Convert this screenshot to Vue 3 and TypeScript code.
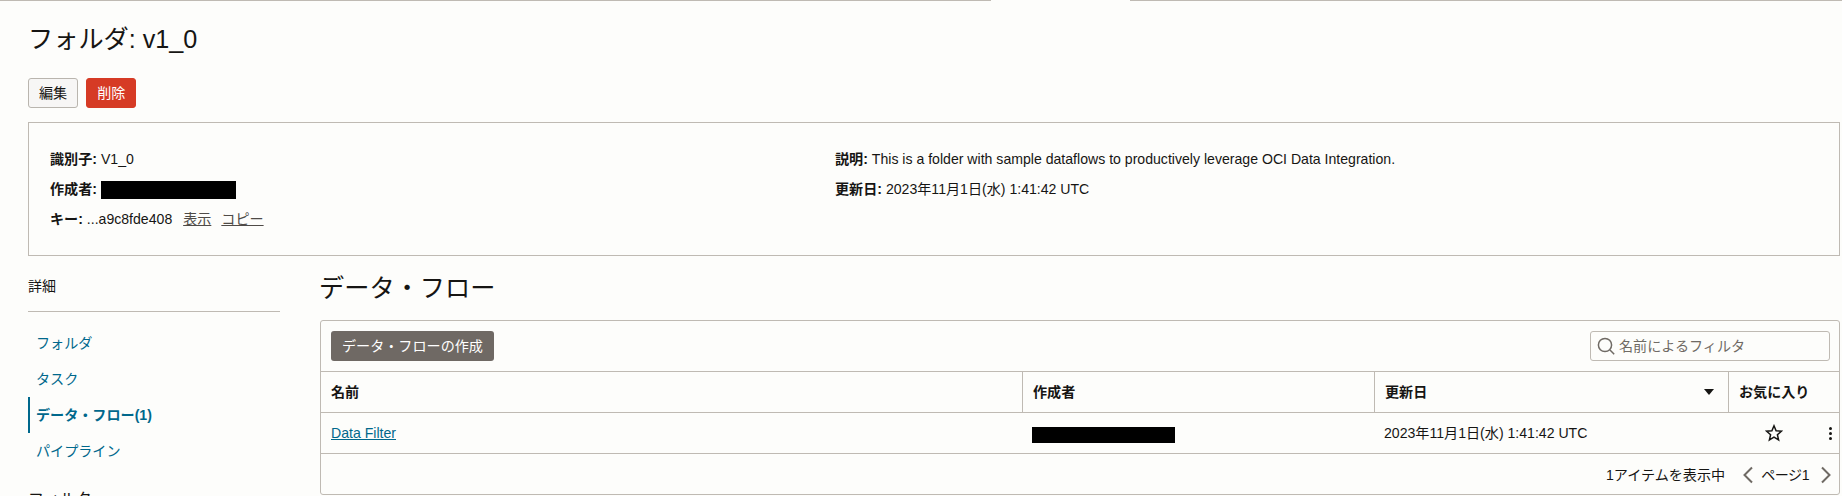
<script setup lang="ts">
const navItems = [
  { label: 'フォルダ', active: false },
  { label: 'タスク', active: false },
  { label: 'データ・フロー(1)', active: true },
  { label: 'パイプライン', active: false },
]
</script>

<template>
  <div class="page">
    <div class="topline"><span class="seg left"></span><span class="seg right"></span></div>
    <h1 class="title">フォルダ: v1_0</h1>
    <div class="actions">
      <button class="btn plain">編集</button>
      <button class="btn danger">削除</button>
    </div>
    <section class="info">
      <div class="info-col">
        <p><b>識別子:</b> V1_0</p>
        <p class="creator"><b>作成者:</b> <span class="redact top"></span></p>
        <p><b>キー:</b> ...a9c8fde408 <a class="mute first">表示</a><a class="mute">コピー</a></p>
      </div>
      <div class="info-col second">
        <p><b>説明:</b> This is a folder with sample dataflows to productively leverage OCI Data Integration.</p>
        <p class="creator"><b>更新日:</b> 2023年11月1日(水) 1:41:42 UTC</p>
      </div>
    </section>
    <div class="body">
      <aside class="side">
        <h3 class="side-title">詳細</h3>
        <ul class="nav">
          <li v-for="item in navItems" :key="item.label" :class="['nav-item', { active: item.active }]">{{ item.label }}</li>
        </ul>
        <h3 class="side-filter">フィルタ</h3>
      </aside>
      <main class="content">
        <h2 class="heading">データ・フロー</h2>
        <div class="panel">
          <div class="toolbar">
            <button class="btn create">データ・フローの作成</button>
            <label class="search">
              <svg width="20" height="20" viewBox="0 0 20 20" fill="none" stroke="#6f6a64" stroke-width="1.5">
                <circle cx="9" cy="9" r="6.6" />
                <path d="M14 14l4.2 4.2" />
              </svg>
              <span>名前によるフィルタ</span>
            </label>
          </div>
          <div class="row head">
            <div class="cell">名前</div>
            <div class="cell">作成者</div>
            <div class="cell sort">更新日<span class="caret"></span></div>
            <div class="cell">お気に入り</div>
          </div>
          <div class="row data">
            <div class="cell"><a class="link">Data Filter</a></div>
            <div class="cell"><span class="redact tbl"></span></div>
            <div class="cell">2023年11月1日(水) 1:41:42 UTC</div>
            <div class="cell fav">
              <svg class="star" width="18" height="18" viewBox="0 0 18 18" fill="none" stroke="#161513" stroke-width="1.5" stroke-linejoin="miter">
                <path d="M9 1.8l2.1 4.9 5.3.5-4 3.5 1.2 5.2L9 13.2l-4.6 2.7 1.2-5.2-4-3.5 5.3-.5z" />
              </svg>
              <span class="dots"><i></i><i></i><i></i></span>
            </div>
          </div>
          <div class="footer">
            <span class="count">1アイテムを表示中</span>
            <svg class="chev" width="12" height="18" viewBox="0 0 12 18" fill="none" stroke="#6f6a64" stroke-width="2"><path d="M10 1.5L2.5 9l7.5 7.5" /></svg>
            <span class="pageno">ページ1</span>
            <svg class="chev" width="12" height="18" viewBox="0 0 12 18" fill="none" stroke="#6f6a64" stroke-width="2"><path d="M2 1.5L9.5 9 2 16.5" /></svg>
          </div>
        </div>
      </main>
    </div>
  </div>
</template>

<style>
html, body { margin: 0; height: 496px; overflow: hidden; background: #fdfdfb; }
</style>

<style scoped>
.page {
  height: 496px;
  overflow: hidden;
  padding: 0 2px 0 28px;
  box-sizing: border-box;
  background: #fdfdfb;
  color: #161513;
  font-family: "Liberation Sans", "Noto Sans CJK JP", sans-serif;
  font-size: 14.1px;
  font-weight: 400;
  line-height: 20px;
}
.topline { display: flex; justify-content: space-between; height: 2px; margin: 0 -2px 0 -28px; }
.seg { display: block; height: 1px; background: #bfbab3; }
.seg.left { width: 991px; }
.seg.right { width: 712px; }
.title { margin: 22px 0 0; font-size: 25.2px; font-weight: 400; line-height: 30px; }
.actions { display: flex; gap: 8px; margin-top: 24px; }
.btn {
  font: inherit;
  height: 30px;
  padding: 0 10px;
  border-radius: 3px;
  box-sizing: border-box;
  cursor: pointer;
}
.plain { background: #f7f6f5; border: 1px solid #b9b5ae; color: #161513; }
.danger { background: #d63b25; border: 1px solid #d63b25; color: #fff; }
.info {
  display: flex;
  margin-top: 14px;
  height: 134px;
  box-sizing: border-box;
  border: 1px solid #bfbab3;
  padding: 26px 21px 0;
}
.info p { margin: 0 0 10px; height: 20px; }
.info-col { width: 785px; }
.second { flex: 1; }
.info b { font-weight: 700; }
.redact { display: inline-block; background: #000; vertical-align: middle; }
.redact.top { width: 135px; height: 18px; margin-top: -1px; }
.redact.tbl { width: 143px; height: 16px; margin-top: 3px; }
.mute { color: #4f4b47; text-decoration: underline; margin-left: 10px; }
.mute.first { margin-left: 7px; }
.body { display: flex; margin-top: 15px; }
.side { width: 252px; flex: none; margin-right: 40px; }
.side-title { margin: 0; font-size: 14px; font-weight: 400; line-height: 30px; padding-bottom: 10px; border-bottom: 1px solid #bfbab3; }
.nav { list-style: none; margin: 13px 0 0; padding: 0; }
.nav-item { height: 36px; line-height: 36px; padding-left: 8px; font-size: 14.1px; color: #00688c; box-sizing: border-box; }
.nav-item.active { border-left: 2px solid #00688c; padding-left: 6px; font-weight: 700; }
.side-filter { margin: 19px 0 0; font-size: 16px; font-weight: 400; line-height: 24px; }
.content { flex: 1; min-width: 0; }
.heading { margin: 0 0 0 -1px; font-size: 25.2px; font-weight: 400; line-height: 34px; }
.panel { margin-top: 15px; border: 1px solid #bfbab3; border-radius: 3px; height: 175px; box-sizing: border-box; }
.toolbar { display: flex; justify-content: space-between; align-items: center; height: 50px; box-sizing: border-box; padding: 0 9px 0 10px; }
.create { background: #6f6964; border: 0; color: #fff; padding: 0 11px; }
.search {
  display: flex; align-items: center; gap: 3px;
  width: 240px; height: 30px; box-sizing: border-box;
  border: 1px solid #bfbab3; border-radius: 3px; padding-left: 5px;
  color: #6f6a64; font-size: 14.1px;
}
.row { display: grid; grid-template-columns: 701px 352px 354px 1fr; height: 41px; border-top: 1px solid #bfbab3; box-sizing: border-box; }
.cell { display: flex; align-items: center; padding-left: 10px; }
.head .cell { font-weight: 700; }
.head .cell + .cell { border-left: 1px solid #bfbab3; }
.sort { position: relative; }
.caret { position: absolute; left: 329px; top: 17px; border: 5px solid transparent; border-top: 6px solid #161513; border-bottom: 0; }
.link { color: #00688c; text-decoration: underline; }
.fav { justify-content: flex-end; padding: 0; }
.star { margin-right: 46px; }
.dots { display: flex; flex-direction: column; gap: 2px; margin-right: 7px; }
.dots i { display: block; width: 3px; height: 3px; border-radius: 50%; background: #161513; }
.footer { display: flex; align-items: center; justify-content: flex-end; height: 41px; border-top: 1px solid #bfbab3; padding-right: 7px; }
.count { margin-right: 17px; }
.pageno { margin: 0 11px 0 7px; letter-spacing: -0.5px; }
</style>
